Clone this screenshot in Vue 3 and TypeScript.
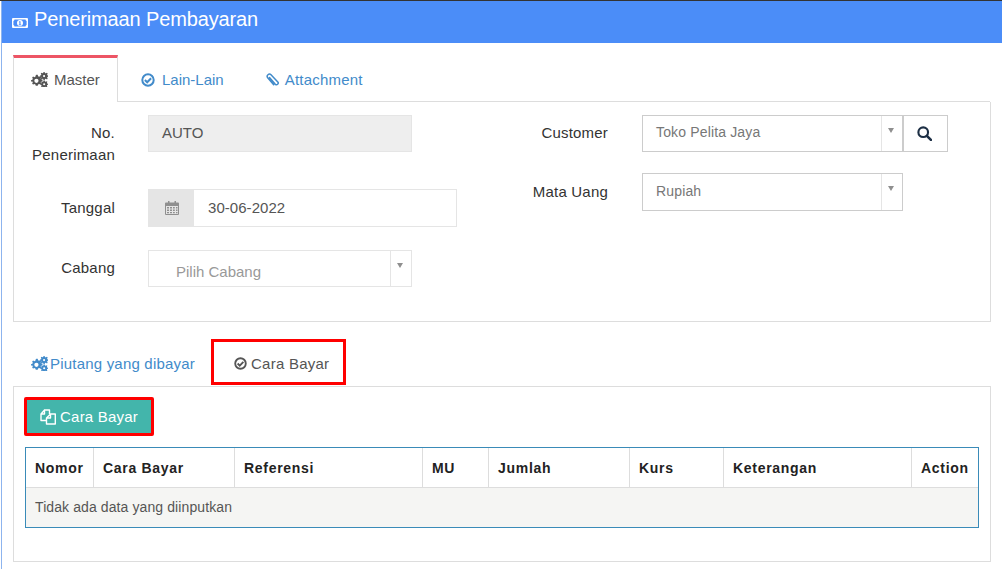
<script setup lang="ts">
const columns = [
  { label: 'Nomor', width: 68 },
  { label: 'Cara Bayar', width: 141 },
  { label: 'Referensi', width: 188 },
  { label: 'MU', width: 66 },
  { label: 'Jumlah', width: 141 },
  { label: 'Kurs', width: 94 },
  { label: 'Keterangan', width: 188 },
  { label: 'Action', width: 67 },
]
</script>

<template>
  <div class="outer">
  <div class="page">
    <header class="title-bar">
      <svg class="money" viewBox="0 0 16 12" width="16" height="12">
        <path fill="#fff" fill-rule="evenodd" d="M1 1h14a1 1 0 0 1 1 1v8a1 1 0 0 1-1 1H1a1 1 0 0 1-1-1V2a1 1 0 0 1 1-1zm1.5 1.6A1.6 1.6 0 0 1 1.4 4v4a1.6 1.6 0 0 1 1.1 1.4h11a1.6 1.6 0 0 1 1.1-1.4V4a1.6 1.6 0 0 1-1.1-1.4h-11zM8 3a3 3 0 1 1 0 6 3 3 0 0 1 0-6z" />
        <path fill="#4b8df8" d="M7.200 4.200h1.300v3.200h.7v.8H6.800v-.8h.6V5.300h-.6z" />
      </svg>
      <h1>Penerimaan Pembayaran</h1>
    </header>

    <nav class="tabs top-tabs">
      <a class="tab active">
        <svg class="ic" viewBox="0 0 16 14" width="17" height="15"><use href="#gears" /></svg>
        Master
      </a>
      <a class="tab">
        <svg class="ic" viewBox="0 0 14 14" width="14" height="14"><use href="#check" /></svg>
        Lain-Lain
      </a>
      <a class="tab">
        <svg class="ic" viewBox="0 0 14 14" width="14" height="14">
          <path fill="none" stroke="currentColor" stroke-width="1.500" stroke-linecap="round" d="M4.500 4.500l5.800 6.700a1.700 1.700 0 0 0 2.500-2.300L6 1.800A2.200 2.200 0 0 0 2.700 4.700l6 7" />
        </svg>
        Attachment
      </a>
    </nav>

    <section class="panel master">
      <div class="col left-col">
        <div class="field f1">
          <label>No. Penerimaan</label>
          <div class="readonly">AUTO</div>
        </div>
        <div class="field f2">
          <label>Tanggal</label>
          <div class="date">
            <span class="addon">
              <svg viewBox="0 0 14 14" width="14" height="14">
                <path fill="#8f8f8f" fill-rule="evenodd" d="M3 0h1.500v1.500h5V0H11v1.500h2a1 1 0 0 1 1 1V13a1 1 0 0 1-1 1H1a1 1 0 0 1-1-1V2.500a1 1 0 0 1 1-1h2zM1 5v8h12V5zm1 1h2v1.500H2zm3 0h2v1.500H5zm3 0h1.800v1.500H8zm3 0h1.500v1.500H11zM2 8.500h2V10H2zm3 0h2V10H5zm3 0h1.800V10H8zm3 0h1.500V10H11zM2 11h2v1.300H2zm3 0h2v1.300H5zm3 0h1.800v1.300H8zm3 0h1.500v1.300H11z" />
              </svg>
            </span>
            <span class="date-value">30-06-2022</span>
          </div>
        </div>
        <div class="field f3">
          <label>Cabang</label>
          <div class="select light cabang">
            <span class="value placeholder">Pilih Cabang</span>
            <span class="arrow"></span>
          </div>
        </div>
      </div>
      <div class="col right-col">
        <div class="field rf1">
          <label>Customer</label>
          <div class="select">
            <span class="value">Toko Pelita Jaya</span>
            <span class="arrow"></span>
          </div>
          <button class="search" type="button">
            <svg viewBox="0 0 14 14" width="15" height="15">
              <circle cx="5.800" cy="5.800" r="4.500" fill="none" stroke="#1d2f45" stroke-width="2" />
              <path d="M9.200 9.200l3.800 3.800" stroke="#1d2f45" stroke-width="2.400" stroke-linecap="round" />
            </svg>
          </button>
        </div>
        <div class="field rf2">
          <label>Mata Uang</label>
          <div class="select tall">
            <span class="value">Rupiah</span>
            <span class="arrow"></span>
          </div>
        </div>
      </div>
    </section>

    <nav class="tabs sub-tabs">
      <a class="sub-tab first">
        <svg class="ic" viewBox="0 0 16 14" width="17" height="15"><use href="#gears" /></svg>
        <span>Piutang yang dibayar</span>
      </a>
      <a class="sub-tab current">
        <svg class="ic" viewBox="0 0 14 14" width="13" height="13"><use href="#check" /></svg>
        <span>Cara Bayar</span>
      </a>
    </nav>

    <section class="panel detail">
      <button class="add" type="button">
        <svg viewBox="0 0 16 16" width="16" height="16">
          <path fill="none" stroke="#fff" stroke-width="1.400" stroke-linejoin="round" d="M1 5L4.500 1V5H1V11.500H6M4.500 1H9.500V5M6.500 9L10.500 5H15.300V15H6.500V9H10.500V5" />
        </svg>
        Cara Bayar
      </button>
      <div class="table">
        <div class="row head">
          <div v-for="c in columns" :key="c.label" class="th" :style="{ width: c.width + 'px' }">{{ c.label }}</div>
        </div>
        <div class="empty">Tidak ada data yang diinputkan</div>
      </div>
    </section>

    <svg class="defs" width="0" height="0">
      <defs>
        <g id="gears" fill="currentColor">
          <path fill-rule="evenodd" d="M5 2.500l1.300.1.400 1.300.9.400 1.200-.6.900.9-.6 1.200.4.900 1.300.4v1.300l-1.300.4-.4.900.6 1.200-.9.900-1.200-.6-.9.400-.4 1.300H4.500l-.4-1.300-.9-.4-1.200.6-.9-.9.6-1.200-.4-.9L0 8.900V7.600l1.300-.4.400-.9-.6-1.200.9-.9 1.200.6.900-.4.400-1.300zm.1 3.700a2 2 0 1 0 0 4 2 2 0 0 0 0-4z" />
          <path fill-rule="evenodd" d="M12.800 0l.4 1 .9.200.9-.5.700.7-.5.900.2.700 1 .3v1l-1 .3-.2.700.5.900-.7.700-.9-.5-.9.200-.4 1h-1l-.3-1-.7-.3-.9.500-.7-.7.500-.9-.200-.7-1-.3v-1l1-.3.200-.7-.5-.9.700-.7.9.5.7-.2.3-1zm-.5 2.800a1 1 0 1 0 0 2 1 1 0 0 0 0-2z" />
          <path fill-rule="evenodd" d="M12.800 8l.4.800.8.200.8-.4.600.6-.4.800.2.700.9.300v.9l-.9.300-.2.700.4.800-.6.600-.8-.4-.8.200-.4.900h-.900l-.3-.900-.7-.2-.8.400-.6-.6.400-.8-.2-.7-.9-.3v-.9l.9-.3.2-.7-.4-.8.6-.6.800.4.700-.2.300-.8zm-.4 2.500a1 1 0 1 0 0 2 1 1 0 0 0 0-2z" />
        </g>
        <g id="check">
          <circle cx="7" cy="7" r="5.700" fill="none" stroke="currentColor" stroke-width="2" />
          <path d="M3.900 7l2.300 2.300L10.100 5.300" fill="none" stroke="currentColor" stroke-width="2" />
        </g>
      </defs>
    </svg>
  </div>
  </div>
</template>

<style>
html, body { margin: 0; padding: 0; background: #fff; }
</style>

<style scoped>
.outer {
  width: 1002px;
  height: 569px;
  overflow: hidden;
  border-top: 1px solid #333;
  box-sizing: border-box;
  padding-left: 1px;
  background: #fff;
}
.page {
  box-sizing: border-box;
  width: 1001px;
  height: 568px;
  overflow: hidden;
  position: relative;
  border-left: 1px solid #8db4ee;
  font-family: "Liberation Sans", Arial, sans-serif;
  font-size: 14px;
  color: #333;
  background: #fff;
}
.defs { position: absolute; }
.title-bar {
  height: 42px;
  background: #4b8df8;
  display: flex;
  align-items: center;
  padding-left: 10px;
  color: #fff;
}
.title-bar h1 { margin: 0 0 0 6px; font-size: 20px; font-weight: 400; line-height: 36px; padding-bottom: 6px; letter-spacing: -0.13px; }
.money { margin-top: 2px; }
.top-tabs {
  display: flex;
  margin: 12px 11px 0;
  width: 977px;
  height: 47px;
  box-sizing: border-box;
  border-bottom: 1px solid #ddd;
}
.tab {
  display: flex;
  align-items: center;
  gap: 6px;
  padding: 3px 20px 0 24px;
  color: #428bca;
  font-size: 15px;
}
.tab.active {
  box-sizing: border-box;
  width: 105px;
  height: 47px;
  padding: 0 0 2px 17px;
  border: 1px solid #ddd;
  border-top: 3px solid #ed5565;
  border-bottom: 0;
  background: #fff;
  color: #555;
}
.tab.active .ic { color: #555; }
.tab:nth-child(2) { padding: 3px 20px 0 23px; gap: 7px; }
.tab:nth-child(3) { padding-left: 21px; letter-spacing: 0.2px; }
.panel { margin: 0 11px; border: 1px solid #ddd; border-top: 0; box-sizing: border-box; width: 978px; }
.master { height: 220px; display: flex; }
.col { position: relative; }
.left-col { width: 399px; flex: none; padding-top: 13px; }
.right-col { flex: 1; padding-top: 13px; }
.field { display: flex; align-items: flex-start; }
.field label { flex: none; text-align: right; font-size: 15px; line-height: 22px; letter-spacing: 0.2px; }
.left-col label { width: 101px; margin-right: 33px; }
.right-col label { width: 195px; margin-right: 34px; }
.f1 { height: 74px; }
.f1 label { padding-top: 7px; }
.readonly {
  box-sizing: border-box;
  width: 264px;
  height: 37px;
  background: #eee;
  border: 1px solid #e5e5e5;
  padding-left: 13px;
  line-height: 33px;
  font-size: 15px;
  color: #555;
}
.f2 { height: 61px; }
.f2 label { padding-top: 8px; }
.date {
  box-sizing: border-box;
  width: 309px;
  height: 38px;
  display: flex;
  flex: none;
  border: 1px solid #e5e5e5;
}
.addon { width: 45px; background: #e5e5e5; display: flex; align-items: center; justify-content: center; }
.date-value { padding-left: 14px; line-height: 36px; color: #555; font-size: 15px; letter-spacing: 0.05px; }
.f3 label { padding-top: 7px; }
.select {
  box-sizing: border-box;
  width: 261px;
  height: 37px;
  display: flex;
  flex: none;
  border: 1px solid #ccc;
}
.select.light { border-color: #e5e5e5; }
.select.tall { height: 38px; }
.cabang { width: 264px; }
.value { flex: 1; padding-left: 13px; line-height: 32px; font-size: 14px; letter-spacing: 0.15px; color: #777; }
.tall .value { line-height: 35px; }
.placeholder { padding-left: 27px; line-height: 41px; font-size: 15px; letter-spacing: 0; color: #999; }
.arrow { width: 20px; flex: none; border-left: 1px solid #e5e5e5; position: relative; }
.arrow::after {
  content: "";
  position: absolute;
  left: 6px;
  top: 12px;
  border: 3px solid transparent;
  border-top: 5px solid #8f8f8f;
  border-bottom: 0;
}
.rf1 { height: 58px; }
.rf1 label { padding-top: 7px; }
.rf2 label { padding-top: 8px; }
.search {
  box-sizing: border-box;
  width: 45px;
  height: 37px;
  background: #fff;
  border: 1px solid #ccc;
  padding: 0 2px 0 0;
  display: flex;
  align-items: center;
  justify-content: center;
}
.sub-tabs { display: flex; height: 64px; margin-left: 11px; box-sizing: border-box; padding-top: 17px; }
.sub-tab { display: flex; align-items: center; gap: 2px; height: 46px; font-size: 15px; box-sizing: border-box; letter-spacing: 0.2px; padding-top: 2px; }
.sub-tab.first { color: #428bca; margin-left: 18px; width: 180px; }
.sub-tab .ic { flex: none; }
.sub-tab.current {
  width: 135px;
  border: 3px solid #f00;
  color: #555;
  padding-left: 20px;
  background: #fff;
  letter-spacing: 0.25px;
  gap: 4px;
}
.detail {
  height: 176px;
  border-top: 1px solid #ddd;
  padding: 10px;
}
.add {
  box-sizing: border-box;
  width: 130px;
  height: 39px;
  background: #43b5ab;
  border: 3px solid #f00;
  color: #fff;
  font: 15px "Liberation Sans", Arial, sans-serif;
  letter-spacing: 0.2px;
  display: flex;
  align-items: center;
  justify-content: center;
  gap: 4px;
  padding: 0;
  border-radius: 2px;
}
.table {
  box-sizing: border-box;
  width: 954px;
  height: 81px;
  margin-top: 11px;
  margin-left: 1px;
  border: 1px solid #3a8bb8;
}
.row { display: flex; box-sizing: border-box; height: 40px; border-bottom: 1px solid #ddd; }
.th {
  box-sizing: border-box;
  padding-left: 9px;
  font-weight: 700;
  font-size: 14px;
  letter-spacing: 0.7px;
  line-height: 40px;
  color: #222;
  border-right: 1px solid #ddd;
  flex: none;
}
.th:last-child { border-right: 0; }
.empty { height: 39px; background: #f5f5f3; padding-left: 9px; line-height: 38px; font-size: 14px; letter-spacing: 0.1px; color: #555; }
</style>
